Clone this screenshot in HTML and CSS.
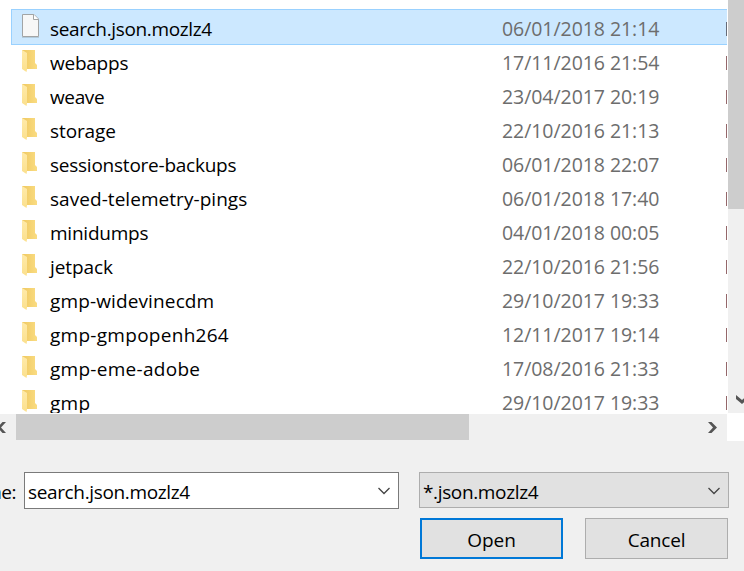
FILE: index.html
```
<!DOCTYPE html>
<html lang="en">
<head>
<meta charset="utf-8">
<title>Open</title>
<link rel="stylesheet" href="styles.css">
</head>
<body>
<svg class="defs" aria-hidden="true">
  <defs>
    <linearGradient id="fold" x1="0" x2="1" y1="0" y2="0"><stop offset="0" stop-color="#efc860"/><stop offset="1" stop-color="#fadc82"/></linearGradient>
    <linearGradient id="flap" x1="0" x2="0" y1="0" y2="1"><stop offset="0" stop-color="#ffeaa9"/><stop offset="1" stop-color="#fbe08d"/></linearGradient>
    <symbol id="folder" viewBox="0 0 16 22">
      <path d="M0 0H13V13L15 15V19H2Z" fill="url(#fold)"/>
      <path d="M0 0L5 3V19.500L4.500 22L0 19Z" fill="url(#flap)"/>
    </symbol>
    <symbol id="file" viewBox="0 0 18 24">
      <path d="M.5.500H12L16.500 5V22.500H.5Z" fill="#f7f7f7" stroke="#a2a4a5"/>
      <path d="M11.500.500V5.500H16.500" fill="#fff" stroke="#a2a4a5"/>
      <path d="M0 23.500H17" stroke="#b3cbdc"/>
    </symbol>
  </defs>
</svg>
<main class="dialog">
  <section class="browser">
    <div class="files">
      <div class="row selected"><svg class="file"><use href="#file"/></svg><span class="name tighter">search.json.mozlz4</span><span class="date">06/01/2018 21:14</span><i class="type"></i></div>
      <div class="row"><svg class="folder"><use href="#folder"/></svg><span class="name tight">webapps</span><span class="date">17/11/2016 21:54</span><i class="type"></i></div>
      <div class="row"><svg class="folder"><use href="#folder"/></svg><span class="name tighter">weave</span><span class="date">23/04/2017 20:19</span><i class="type"></i></div>
      <div class="row"><svg class="folder"><use href="#folder"/></svg><span class="name snug">storage</span><span class="date">22/10/2016 21:13</span><i class="type"></i></div>
      <div class="row"><svg class="folder"><use href="#folder"/></svg><span class="name tight">sessionstore-backups</span><span class="date">06/01/2018 22:07</span><i class="type"></i></div>
      <div class="row"><svg class="folder"><use href="#folder"/></svg><span class="name even">saved-telemetry-pings</span><span class="date">06/01/2018 17:40</span><i class="type"></i></div>
      <div class="row"><svg class="folder"><use href="#folder"/></svg><span class="name tight">minidumps</span><span class="date">04/01/2018 00:05</span><i class="type"></i></div>
      <div class="row"><svg class="folder"><use href="#folder"/></svg><span class="name snug">jetpack</span><span class="date">22/10/2016 21:56</span><i class="type"></i></div>
      <div class="row"><svg class="folder"><use href="#folder"/></svg><span class="name loose">gmp-widevinecdm</span><span class="date">29/10/2017 19:33</span><i class="type"></i></div>
      <div class="row"><svg class="folder"><use href="#folder"/></svg><span class="name looser">gmp-gmpopenh264</span><span class="date">12/11/2017 19:14</span><i class="type"></i></div>
      <div class="row"><svg class="folder"><use href="#folder"/></svg><span class="name looser">gmp-eme-adobe</span><span class="date">17/08/2016 21:33</span><i class="type"></i></div>
      <div class="row"><svg class="folder"><use href="#folder"/></svg><span class="name looser">gmp</span><span class="date">29/10/2017 19:33</span><i class="type"></i></div>
    </div>
    <div class="vscroll">
      <div class="vthumb"></div>
      <svg class="down" viewBox="0 0 16 12"><path d="M0 1V5L6 10L12 5V1L6 6Z" fill="#555"/></svg>
    </div>
  </section>
  <div class="hscroll">
    <svg class="left" viewBox="0 0 16 12"><path d="M2.500 0H6L1 5.500L6 11H2.500L-2.500 5.500Z" fill="#555"/></svg>
    <div class="hthumb"></div>
    <svg class="right" viewBox="0 0 10 12"><path d="M0 0H3.500L9 5.500L3.500 11H0L5 5.500Z" fill="#555"/></svg>
    <div class="corner"></div>
  </div>
  <div class="fields">
    <label class="label"><span>File name:</span></label>
    <div class="combo filename"><span class="tighter">search.json.mozlz4</span><svg class="chev" viewBox="0 0 12 8"><path d="M.5 1L6 6.500L11.500 1" fill="none" stroke="#444" stroke-width="1.300"/></svg></div>
    <div class="combo filter"><span class="tighter">*.json.mozlz4</span><svg class="chev" viewBox="0 0 12 8"><path d="M.5 1L6 6.500L11.500 1" fill="none" stroke="#444" stroke-width="1.300"/></svg></div>
  </div>
  <div class="actions">
    <button class="btn open">Open</button>
    <button class="btn cancel">Cancel</button>
  </div>
</main>
</body>
</html>
```
FILE: styles.css
```
* { box-sizing: border-box; }
body { margin: 0; overflow: hidden; background: #f0f0f0; }
.defs { position: absolute; width: 0; height: 0; }
.dialog {
  width: 744px; height: 571px; overflow: hidden;
  display: flex; flex-direction: column;
  background: #f0f0f0; color: #000;
  font: 19px/26px "Open Sans", "Noto Sans", sans-serif;
}
.browser { display: flex; height: 414px; background: #fff; }
.files { width: 728px; height: 413px; padding: 9px 1px 0 11px; overflow: hidden; }
.row {
  display: flex; align-items: flex-start;
  width: 716px; height: 34px; padding-left: 11px;
}
.row.selected {
  height: 36px; margin-bottom: -1px;
  background: #cce8ff; box-shadow: inset 1px 0 #99d1ff, inset 0 1px #99d1ff, inset 0 -1px #99d1ff;
}
.row:not(.selected) { position: relative; }
.folder { width: 16px; height: 22px; margin: 6px 12px 0 0; flex: none; }
.file { width: 18px; height: 24px; margin: 5px 10px 0 0; flex: none; }
.name { width: 452px; padding-top: 6px; white-space: nowrap; }
.date { width: 224px; padding-top: 6px; color: #6d6d6d; font-size: 19.5px; letter-spacing: -.06px; white-space: nowrap; }
.selected .name, .selected .date { padding-top: 7px; }
.tighter { letter-spacing: -.36px; }
.tight { letter-spacing: -.24px; }
.snug { letter-spacing: -.1px; }
.even { letter-spacing: .05px; }
.loose { letter-spacing: .13px; }
.looser { letter-spacing: .28px; }
.type { width: 1px; height: 14px; margin-top: 12px; background: #94676a; flex: none; }
.selected .type { margin-top: 13px; background: #666b77; }
.vscroll { display: flex; flex-direction: column; justify-content: space-between; width: 16px; height: 413px; background: #f0f0f0; }
.vthumb { height: 209px; background: #cdcdcd; }
.down { width: 16px; height: 12px; margin: 0 0 7px 8px; }
.hscroll { display: flex; height: 27px; }
.left { width: 16px; height: 12px; margin-top: 8px; }
.hthumb { width: 453px; height: 26px; background: #cdcdcd; }
.right { width: 10px; height: 12px; margin: 8px 9px 0 239px; }
.corner { width: 17px; height: 27px; background: #fff; }
.fields { display: flex; height: 37px; margin-top: 31px; }
.label { display: flex; justify-content: flex-end; width: 16px; margin-right: 8px; padding-top: 7px; letter-spacing: -.5px; white-space: nowrap; }
.combo { display: flex; justify-content: space-between; border: 1px solid #7a7a7a; }
.combo span { padding-top: 6px; }
.filename { width: 375px; height: 37px; padding: 0 8px 0 3px; background: #fff; }
.filter { width: 310px; height: 36px; margin-left: 20px; padding: 0 8px 0 3px; border-color: #adadad; background: #e1e1e1; }
.chev { width: 12px; height: 8px; margin-top: 14px; }
.actions { display: flex; gap: 22px; margin: 9px 0 0 420px; }
.btn {
  width: 143px; height: 41px; padding: 2px 0 0; border: 1px solid #adadad;
  background: #e1e1e1; color: #000; font: inherit;
}
.open { border: 2px solid #0078d7; }
.cancel { letter-spacing: -.2px; }
```
